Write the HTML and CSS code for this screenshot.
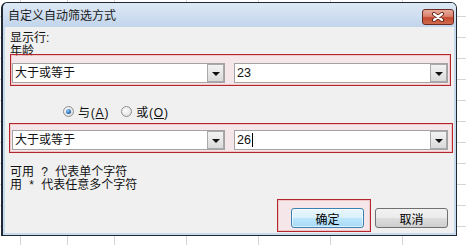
FILE: index.html
```html
<!DOCTYPE html>
<html lang="zh-CN">
  <head>
    <meta charset="UTF-8" />
    <title>自定义自动筛选方式</title>
    <link rel="stylesheet" href="styles.css">
  </head>
  <body>
    <div class="window">
      <div class="titlebar">
        <span class="title">自定义自动筛选方式</span>
        <span class="close-btn">
          <svg width="14" height="10" viewBox="0 0 14 10">
            <path d="M3 2 L11 8 M11 2 L3 8" stroke="#5a1a12" stroke-width="4" stroke-linecap="round" />
            <path d="M3 2 L11 8 M11 2 L3 8" stroke="#fff" stroke-width="2.2" stroke-linecap="round" />
          </svg>
        </span>
      </div>

      <div class="client">
        <div class="label">显示行:</div>
        <div class="label">年龄</div>

        <!-- first condition -->
        <div class="mark cond cond-first">
          <div class="combo combo-op">
            <span class="combo-text">大于或等于</span>
            <span class="drop"><span class="arrow"></span></span>
          </div>
          <div class="combo combo-val">
            <span class="combo-text val">23</span>
            <span class="drop"><span class="arrow"></span></span>
          </div>
        </div>

        <div class="radios">
          <span class="radio checked"></span>
          <span class="radio-label">与(<u>A</u>)</span>
          <span class="radio"></span>
          <span class="radio-label">或(<u>O</u>)</span>
        </div>

        <!-- second condition -->
        <div class="mark cond cond-second">
          <div class="combo combo-op">
            <span class="combo-text">大于或等于</span>
            <span class="drop"><span class="arrow"></span></span>
          </div>
          <div class="combo combo-val">
            <span class="combo-text val">26<span class="caret"></span></span>
            <span class="drop"><span class="arrow"></span></span>
          </div>
        </div>

        <div class="hint">
          <div>可用 ? 代表单个字符</div>
          <div>用 * 代表任意多个字符</div>
        </div>

        <div class="buttons">
          <div class="mark ok-mark">
            <span class="btn btn-default">确定</span>
          </div>
          <span class="btn btn-cancel">取消</span>
        </div>
      </div>
    </div>
  </body>
</html>
```

FILE: styles.css
```css
/* dialog over an excel sheet */
body {
  margin: 0;
  width: 466px;
  height: 245px;
  overflow: hidden;
  font-family: "Liberation Sans", "Noto Sans CJK SC", sans-serif;
  font-size: 12px;
  color: #111;
  background-color: #fff;
  background-image:
    linear-gradient(#d4d4d4, #d4d4d4),
    linear-gradient(#d4d4d4, #d4d4d4),
    linear-gradient(#d4d4d4, #d4d4d4),
    linear-gradient(#d4d4d4, #d4d4d4),
    linear-gradient(#d4d4d4, #d4d4d4),
    linear-gradient(#d4d4d4, #d4d4d4),
    linear-gradient(#d4d4d4, #d4d4d4),
    repeating-linear-gradient(to bottom, transparent 0, transparent 20px, #d4d4d4 20px, #d4d4d4 21px);
  background-size: 1px 100%, 1px 100%, 1px 100%, 1px 100%, 1px 100%, 1px 100%, 1px 100%, 100% 100%;
  background-position: 20px 0, 67px 0, 114px 0, 186px 0, 258px 0, 330px 0, 402px 0, 0 -4px;
  background-repeat: no-repeat;
}

.window {
  box-sizing: border-box;
  width: 456px;
  height: 234px;
  margin: 2px 0 0 1px;
  border: 1px solid #1f2a35;
  border-left-width: 2px;
  border-radius: 6px 6px 0 0;
  background: #c8daee;
  display: flex;
  flex-direction: column;
}

.titlebar {
  height: 24px;
  display: flex;
  justify-content: space-between;
  align-items: flex-start;
  padding-left: 5px;
  border-radius: 5px 5px 0 0;
  background: linear-gradient(#dde8f5, #c2d5ec);
}
.title {
  line-height: 24px;
  margin-top: 1px;
  color: #1b1b1b;
}
.close-btn {
  box-sizing: border-box;
  width: 32px;
  height: 16px;
  margin: 6px 2px 0 0;
  border: 1px solid #6b2a20;
  border-radius: 3px;
  background: linear-gradient(#e9ab9b, #d98470 45%, #c5492f 55%, #cf6a4e);
  display: flex;
  align-items: center;
  justify-content: center;
}

.client {
  flex: 1;
  margin: 0 2px 2px 2px;
  background: #f0f0f0;
  display: flex;
  flex-direction: column;
  padding: 5px 0 1px 0;
}
.label {
  line-height: 13px;
  margin-left: 5px;
}

/* red annotation frames */
.mark {
  box-sizing: border-box;
  border: 1px solid #b3262c;
  background: rgba(255, 215, 220, 0.35);
  box-shadow: inset 0 0 0 1px rgba(230, 140, 140, 0.35);
}
.cond {
  display: flex;
  gap: 9px;
}
.cond-first {
  width: 441px;
  margin: -4px 0 0 5px;
  padding: 8px 2px 2px 1px;
}
.cond-second {
  width: 444px;
  margin: 4px 0 0 4px;
  padding: 6px 4px 2px 2px;
}

.combo {
  box-sizing: border-box;
  height: 20px;
  border: 1px solid #a3a3a3;
  background: #fff;
  display: flex;
  align-items: center;
  justify-content: space-between;
}
.combo-op {
  width: 213px;
}
.combo-val {
  width: 214px;
}
.combo-text {
  padding-left: 2px;
  line-height: 16px;
  display: flex;
  align-items: center;
}
.val {
  font-size: 12.5px;
}
.caret {
  display: inline-block;
  width: 1px;
  height: 14px;
  margin-left: 1px;
  background: #000;
}
.drop {
  box-sizing: border-box;
  width: 17px;
  height: 18px;
  border: 1px solid #a9a9a9;
  background: linear-gradient(#f3f3f3, #dadada);
  display: flex;
  align-items: center;
  justify-content: center;
}
.arrow {
  width: 0;
  height: 0;
  border-left: 4px solid transparent;
  border-right: 4px solid transparent;
  border-top: 4px solid #111;
  margin-top: 2px;
}

.radios {
  height: 16px;
  margin-top: 17px;
  padding-left: 58px;
  display: flex;
  align-items: center;
}
.radio {
  box-sizing: border-box;
  width: 11px;
  height: 11px;
  border-radius: 50%;
  border: 1px solid #8f9092;
  background: radial-gradient(circle at 40% 40%, #fff, #d6d6d6);
  display: flex;
  align-items: center;
  justify-content: center;
}
.radio.checked::after {
  content: "";
  width: 5px;
  height: 5px;
  border-radius: 50%;
  background: radial-gradient(circle at 40% 35%, #8fd0ff, #1a5da8 70%);
}
.radio-label {
  margin: 0 12px 0 4px;
  letter-spacing: 0.8px;
}

.hint {
  margin: 13px 0 0 5px;
  line-height: 13px;
  word-spacing: 4px;
}

.buttons {
  margin-top: auto;
  display: flex;
  justify-content: flex-end;
  align-items: flex-start;
  padding-right: 6px;
}
.ok-mark {
  width: 94px;
  padding: 8px 6px 3px 13px;
}
.btn {
  box-sizing: border-box;
  width: 73px;
  height: 20px;
  border: 1px solid #707070;
  border-radius: 3px;
  background: linear-gradient(#f2f2f2, #ebebeb 50%, #dddddd 50%, #cfcfcf);
  display: flex;
  align-items: center;
  justify-content: center;
  color: #000;
}
.btn-default {
  border-color: #3c7fb1;
  background: linear-gradient(#eaf6fd, #d9f0fc 50%, #bee6fd 50%, #a7d9f5);
  box-shadow: inset 0 0 0 1px rgba(255, 255, 255, 0.6);
}
.btn-cancel {
  margin: 9px 0 0 4px;
}
```
